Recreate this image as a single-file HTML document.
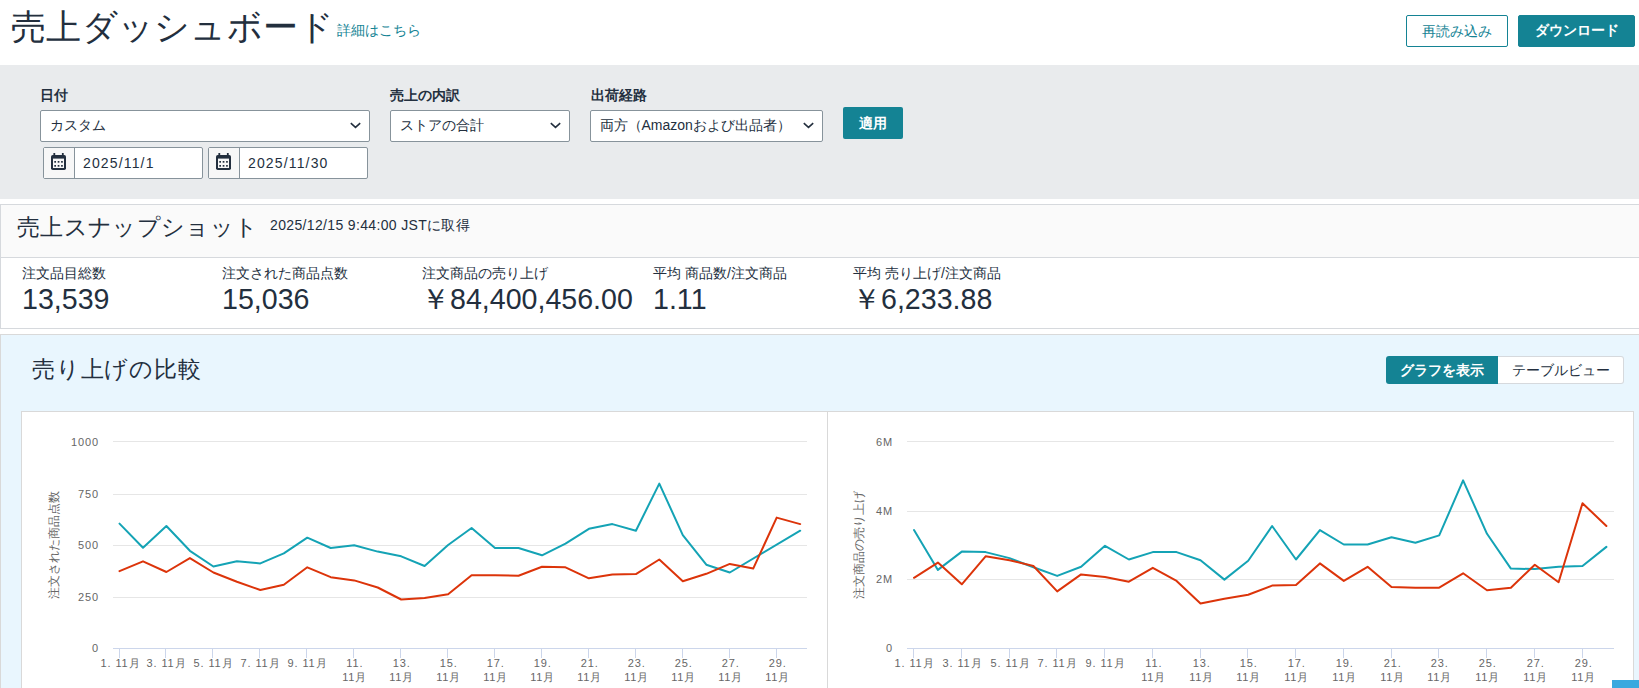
<!DOCTYPE html>
<html lang="ja"><head><meta charset="utf-8">
<style>
*{box-sizing:border-box;margin:0;padding:0}
html,body{width:1639px;height:688px;overflow:hidden;background:#fff}
body{position:relative;font-family:"Liberation Sans",sans-serif;color:#232f3e}
.a{position:absolute;white-space:nowrap}
.h1{left:11px;top:3px;font-size:35px;line-height:48px;letter-spacing:0.3px}
.lnk{left:337px;top:20px;font-size:14px;line-height:20px;color:#148394}
.btn{position:absolute;top:15px;height:32px;border-radius:2px;font-size:14px;line-height:30px;text-align:center}
.b1{left:1406px;width:102px;border:1px solid #148394;color:#148394;background:#fff}
.b2{left:1518px;width:117px;background:#148394;color:#fff;font-weight:bold;border:1px solid #148394;line-height:29px}
.bar{left:0;top:65px;width:1639px;height:134px;background:#e9ebed}
.lab{font-size:14px;font-weight:bold;line-height:20px;top:85px}
.sel{position:absolute;top:110px;height:32px;background:#fff;border:1px solid #87939b;border-radius:2px;font-size:14px;line-height:29px;padding-left:8.5px}
.chev{position:absolute;right:8px;top:10.5px;width:11px;height:7px}
.date{position:absolute;top:147px;height:32px;width:160px;background:#fff;border:1px solid #87939b;border-radius:2px}
.date .ic{position:absolute;left:0;top:0;width:31px;height:30px;background:#f7f7f7;border-right:1px solid #87939b}
.date .tx{position:absolute;left:39px;top:0;font-size:14px;line-height:30px;letter-spacing:1.15px}
.apply{position:absolute;left:843px;top:107px;width:60px;height:32px;background:#148394;color:#fff;border-radius:2px;font-size:14px;font-weight:bold;line-height:32px;text-align:center}
.snap{left:0;top:204px;width:1700px;height:125px;border:1px solid #d6d9dd;background:#fff}
.snaph{position:absolute;left:0;top:0;width:100%;height:53px;background:#fafafa;border-bottom:1px solid #d6d9dd}
.t24{font-size:23px;line-height:32px;letter-spacing:0.35px}
.ml{font-size:14px;line-height:20px;top:263px}
.mv{font-size:28.6px;line-height:36px;top:281px;letter-spacing:0px}
.cmp{left:0;top:334px;width:1700px;height:400px;border:1px solid #d9d9d9;background:#e9f6fe}
.tg{position:absolute;top:356px;height:28px;font-size:14px;line-height:28px;text-align:center}
.panel{left:21px;top:411px;width:1613px;height:300px;background:#fff;border:1px solid #d9d9d9}
svg.full{position:absolute;left:0;top:0}
.date svg{position:absolute}
.axt{font-size:12px;fill:#666}
.ax{font-size:11px;fill:#666;letter-spacing:0.9px}
</style></head><body>
<div class="a h1">売上ダッシュボード</div>
<div class="a lnk">詳細はこちら</div>
<div class="btn b1">再読み込み</div>
<div class="btn b2">ダウンロード</div>

<div class="a bar"></div>
<div class="a lab" style="left:40px">日付</div>
<div class="sel" style="left:40px;width:330px">カスタム<svg class="chev" viewBox="0 0 11 7"><path d="M0.8 1.2 L5.5 5.4 L10.2 1.2" fill="none" stroke="#232f3e" stroke-width="1.6"/></svg></div>
<div class="date" style="left:43px"><div class="ic"><svg width="16" height="17" style="left:7px;top:5px" viewBox="0 0 16 17"><rect x="0" y="2" width="15" height="15" rx="1.8" fill="#232f3e"/><rect x="2" y="5.6" width="11" height="9.4" fill="#f7f7f7"/><rect x="2.4" y="0" width="1.8" height="3" fill="#232f3e"/><rect x="10.9" y="0" width="1.8" height="3" fill="#232f3e"/><g fill="#232f3e"><rect x="3.3" y="8" width="1.7" height="1.7"/><rect x="6.7" y="8" width="1.7" height="1.7"/><rect x="10.1" y="8" width="1.7" height="1.7"/><rect x="3.3" y="12" width="1.7" height="1.7"/><rect x="6.7" y="12" width="1.7" height="1.7"/><rect x="10.1" y="12" width="1.7" height="1.7"/></g></svg></div><div class="tx">2025/11/1</div></div>
<div class="date" style="left:208px"><div class="ic"><svg width="16" height="17" style="left:7px;top:5px" viewBox="0 0 16 17"><rect x="0" y="2" width="15" height="15" rx="1.8" fill="#232f3e"/><rect x="2" y="5.6" width="11" height="9.4" fill="#f7f7f7"/><rect x="2.4" y="0" width="1.8" height="3" fill="#232f3e"/><rect x="10.9" y="0" width="1.8" height="3" fill="#232f3e"/><g fill="#232f3e"><rect x="3.3" y="8" width="1.7" height="1.7"/><rect x="6.7" y="8" width="1.7" height="1.7"/><rect x="10.1" y="8" width="1.7" height="1.7"/><rect x="3.3" y="12" width="1.7" height="1.7"/><rect x="6.7" y="12" width="1.7" height="1.7"/><rect x="10.1" y="12" width="1.7" height="1.7"/></g></svg></div><div class="tx">2025/11/30</div></div>
<div class="a lab" style="left:390px">売上の内訳</div>
<div class="sel" style="left:390px;width:180px">ストアの合計<svg class="chev" viewBox="0 0 11 7"><path d="M0.8 1.2 L5.5 5.4 L10.2 1.2" fill="none" stroke="#232f3e" stroke-width="1.6"/></svg></div>
<div class="a lab" style="left:591px">出荷経路</div>
<div class="sel" style="left:590px;width:233px">両方（Amazonおよび出品者）<svg class="chev" viewBox="0 0 11 7"><path d="M0.8 1.2 L5.5 5.4 L10.2 1.2" fill="none" stroke="#232f3e" stroke-width="1.6"/></svg></div>
<div class="apply">適用</div>

<div class="a snap"><div class="snaph"></div></div>
<div class="a t24" style="left:17px;top:211px">売上スナップショット</div>
<div class="a" style="left:270px;top:215px;font-size:14px;line-height:20px;letter-spacing:0.35px">2025/12/15 9:44:00 JSTに取得</div>
<div class="a ml" style="left:22px">注文品目総数</div>
<div class="a mv" style="left:22px">13,539</div>
<div class="a ml" style="left:222px">注文された商品点数</div>
<div class="a mv" style="left:222px">15,036</div>
<div class="a ml" style="left:422px">注文商品の売り上げ</div>
<div class="a mv" style="left:421px">￥84,400,456.00</div>
<div class="a ml" style="left:653px">平均 商品数/注文商品</div>
<div class="a mv" style="left:653px">1.11</div>
<div class="a ml" style="left:853px">平均 売り上げ/注文商品</div>
<div class="a mv" style="left:852px">￥6,233.88</div>

<div class="a cmp"></div>
<div class="a t24" style="left:32px;top:353px;letter-spacing:0.75px">売り上げの比較</div>
<div class="tg" style="left:1386px;width:112px;background:#148394;color:#fff;font-weight:bold;border-radius:3px 0 0 3px">グラフを表示</div>
<div class="tg" style="left:1498px;width:126px;background:#fff;border:1px solid #d6d9dd;border-left:0;border-radius:0 3px 3px 0;line-height:26px">テーブルビュー</div>
<div class="a panel"></div>
<svg class="full" width="1639" height="688" viewBox="0 0 1639 688">
<path d="M113 441.5 H807" stroke="#e6e6e6" stroke-width="1"/>
<text class="ax" x="99" y="445.5" text-anchor="end">1000</text>
<path d="M113 494.5 H807" stroke="#e6e6e6" stroke-width="1"/>
<text class="ax" x="99" y="497.6" text-anchor="end">750</text>
<path d="M113 545.5 H807" stroke="#e6e6e6" stroke-width="1"/>
<text class="ax" x="99" y="548.6" text-anchor="end">500</text>
<path d="M113 597.5 H807" stroke="#e6e6e6" stroke-width="1"/>
<text class="ax" x="99" y="600.6" text-anchor="end">250</text>
<path d="M113 648.5 H807" stroke="#ccd6eb" stroke-width="1"/>
<text class="ax" x="99" y="651.6" text-anchor="end">0</text>
<path d="M119.5 648 V658" stroke="#ccd6eb" stroke-width="1"/>
<text class="ax" x="120.5" y="667" text-anchor="middle">1. 11月</text>
<path d="M165.5 648 V658" stroke="#ccd6eb" stroke-width="1"/>
<text class="ax" x="166.5" y="667" text-anchor="middle">3. 11月</text>
<path d="M212.5 648 V658" stroke="#ccd6eb" stroke-width="1"/>
<text class="ax" x="213.5" y="667" text-anchor="middle">5. 11月</text>
<path d="M259.5 648 V658" stroke="#ccd6eb" stroke-width="1"/>
<text class="ax" x="260.5" y="667" text-anchor="middle">7. 11月</text>
<path d="M306.5 648 V658" stroke="#ccd6eb" stroke-width="1"/>
<text class="ax" x="307.5" y="667" text-anchor="middle">9. 11月</text>
<path d="M353.5 648 V658" stroke="#ccd6eb" stroke-width="1"/>
<text class="ax" x="354.8" y="667" text-anchor="middle">11.</text><text class="ax" x="354.7" y="681" text-anchor="middle">11月</text>
<path d="M400.5 648 V658" stroke="#ccd6eb" stroke-width="1"/>
<text class="ax" x="401.8" y="667" text-anchor="middle">13.</text><text class="ax" x="401.7" y="681" text-anchor="middle">11月</text>
<path d="M447.5 648 V658" stroke="#ccd6eb" stroke-width="1"/>
<text class="ax" x="448.8" y="667" text-anchor="middle">15.</text><text class="ax" x="448.7" y="681" text-anchor="middle">11月</text>
<path d="M494.5 648 V658" stroke="#ccd6eb" stroke-width="1"/>
<text class="ax" x="495.8" y="667" text-anchor="middle">17.</text><text class="ax" x="495.7" y="681" text-anchor="middle">11月</text>
<path d="M541.5 648 V658" stroke="#ccd6eb" stroke-width="1"/>
<text class="ax" x="542.8" y="667" text-anchor="middle">19.</text><text class="ax" x="542.7" y="681" text-anchor="middle">11月</text>
<path d="M588.5 648 V658" stroke="#ccd6eb" stroke-width="1"/>
<text class="ax" x="589.8" y="667" text-anchor="middle">21.</text><text class="ax" x="589.7" y="681" text-anchor="middle">11月</text>
<path d="M635.5 648 V658" stroke="#ccd6eb" stroke-width="1"/>
<text class="ax" x="636.8" y="667" text-anchor="middle">23.</text><text class="ax" x="636.7" y="681" text-anchor="middle">11月</text>
<path d="M682.5 648 V658" stroke="#ccd6eb" stroke-width="1"/>
<text class="ax" x="683.8" y="667" text-anchor="middle">25.</text><text class="ax" x="683.7" y="681" text-anchor="middle">11月</text>
<path d="M729.5 648 V658" stroke="#ccd6eb" stroke-width="1"/>
<text class="ax" x="730.8" y="667" text-anchor="middle">27.</text><text class="ax" x="730.7" y="681" text-anchor="middle">11月</text>
<path d="M776.5 648 V658" stroke="#ccd6eb" stroke-width="1"/>
<text class="ax" x="777.8" y="667" text-anchor="middle">29.</text><text class="ax" x="777.7" y="681" text-anchor="middle">11月</text>
<text class="axt" transform="translate(57.5 544.5) rotate(-90)" text-anchor="middle">注文された商品点数</text>
<path d="M119.5 523.6 L143.0 547.7 L166.4 526.0 L189.9 550.8 L213.4 566.5 L236.9 561.3 L260.3 563.4 L283.8 553.4 L307.3 537.7 L330.7 548.0 L354.2 545.3 L377.7 551.6 L401.2 556.3 L424.6 566.0 L448.1 545.0 L471.6 528.0 L495.0 548.0 L518.5 548.0 L542.0 555.3 L565.5 543.7 L588.9 528.8 L612.4 524.1 L635.9 530.7 L659.3 483.6 L682.8 535.1 L706.3 564.7 L729.8 572.5 L800.2 530.7" fill="none" stroke="#14a3b5" stroke-width="2" stroke-linejoin="round" stroke-linecap="round"/>
<path d="M119.5 571.2 L143.0 561.3 L166.4 572.0 L189.9 558.1 L213.4 572.5 L236.9 581.7 L260.3 590.0 L283.8 584.8 L307.3 567.3 L330.7 577.2 L354.2 580.4 L377.7 587.5 L401.2 599.5 L424.6 598.0 L448.1 594.3 L471.6 575.2 L495.0 575.2 L518.5 575.7 L542.0 566.8 L565.5 567.3 L588.9 578.3 L612.4 574.4 L635.9 574.1 L659.3 559.5 L682.8 581.2 L706.3 573.8 L729.8 563.9 L753.2 568.6 L776.7 517.6 L800.2 524.1" fill="none" stroke="#dc340a" stroke-width="2" stroke-linejoin="round" stroke-linecap="round"/>
<path d="M827.5 411 V688" stroke="#d9d9d9" stroke-width="1"/>
<path d="M907 441.5 H1614" stroke="#e6e6e6" stroke-width="1"/>
<text class="ax" x="893" y="445.5" text-anchor="end">6M</text>
<path d="M907 511.5 H1614" stroke="#e6e6e6" stroke-width="1"/>
<text class="ax" x="893" y="514.6" text-anchor="end">4M</text>
<path d="M907 579.5 H1614" stroke="#e6e6e6" stroke-width="1"/>
<text class="ax" x="893" y="582.6" text-anchor="end">2M</text>
<path d="M907 648.5 H1614" stroke="#ccd6eb" stroke-width="1"/>
<text class="ax" x="893" y="651.6" text-anchor="end">0</text>
<path d="M913.5 648 V658" stroke="#ccd6eb" stroke-width="1"/>
<text class="ax" x="914.5" y="667" text-anchor="middle">1. 11月</text>
<path d="M961.5 648 V658" stroke="#ccd6eb" stroke-width="1"/>
<text class="ax" x="962.5" y="667" text-anchor="middle">3. 11月</text>
<path d="M1009.5 648 V658" stroke="#ccd6eb" stroke-width="1"/>
<text class="ax" x="1010.5" y="667" text-anchor="middle">5. 11月</text>
<path d="M1056.5 648 V658" stroke="#ccd6eb" stroke-width="1"/>
<text class="ax" x="1057.5" y="667" text-anchor="middle">7. 11月</text>
<path d="M1104.5 648 V658" stroke="#ccd6eb" stroke-width="1"/>
<text class="ax" x="1105.5" y="667" text-anchor="middle">9. 11月</text>
<path d="M1152.5 648 V658" stroke="#ccd6eb" stroke-width="1"/>
<text class="ax" x="1153.8" y="667" text-anchor="middle">11.</text><text class="ax" x="1153.7" y="681" text-anchor="middle">11月</text>
<path d="M1200.5 648 V658" stroke="#ccd6eb" stroke-width="1"/>
<text class="ax" x="1201.8" y="667" text-anchor="middle">13.</text><text class="ax" x="1201.7" y="681" text-anchor="middle">11月</text>
<path d="M1247.5 648 V658" stroke="#ccd6eb" stroke-width="1"/>
<text class="ax" x="1248.8" y="667" text-anchor="middle">15.</text><text class="ax" x="1248.7" y="681" text-anchor="middle">11月</text>
<path d="M1295.5 648 V658" stroke="#ccd6eb" stroke-width="1"/>
<text class="ax" x="1296.8" y="667" text-anchor="middle">17.</text><text class="ax" x="1296.7" y="681" text-anchor="middle">11月</text>
<path d="M1343.5 648 V658" stroke="#ccd6eb" stroke-width="1"/>
<text class="ax" x="1344.8" y="667" text-anchor="middle">19.</text><text class="ax" x="1344.7" y="681" text-anchor="middle">11月</text>
<path d="M1391.5 648 V658" stroke="#ccd6eb" stroke-width="1"/>
<text class="ax" x="1392.8" y="667" text-anchor="middle">21.</text><text class="ax" x="1392.7" y="681" text-anchor="middle">11月</text>
<path d="M1438.5 648 V658" stroke="#ccd6eb" stroke-width="1"/>
<text class="ax" x="1439.8" y="667" text-anchor="middle">23.</text><text class="ax" x="1439.7" y="681" text-anchor="middle">11月</text>
<path d="M1486.5 648 V658" stroke="#ccd6eb" stroke-width="1"/>
<text class="ax" x="1487.8" y="667" text-anchor="middle">25.</text><text class="ax" x="1487.7" y="681" text-anchor="middle">11月</text>
<path d="M1534.5 648 V658" stroke="#ccd6eb" stroke-width="1"/>
<text class="ax" x="1535.8" y="667" text-anchor="middle">27.</text><text class="ax" x="1535.7" y="681" text-anchor="middle">11月</text>
<path d="M1582.5 648 V658" stroke="#ccd6eb" stroke-width="1"/>
<text class="ax" x="1583.8" y="667" text-anchor="middle">29.</text><text class="ax" x="1583.7" y="681" text-anchor="middle">11月</text>
<text class="axt" transform="translate(862.5 544.5) rotate(-90)" text-anchor="middle">注文商品の売り上げ</text>
<path d="M914.0 530.1 L937.9 569.9 L961.8 551.6 L985.6 552.1 L1009.5 558.1 L1033.4 567.3 L1057.2 575.9 L1081.1 566.8 L1105.0 545.8 L1128.9 559.5 L1152.8 552.1 L1176.6 552.1 L1200.5 560.2 L1224.4 579.6 L1248.2 560.8 L1272.1 526.0 L1296.0 559.5 L1319.9 530.1 L1343.8 544.5 L1367.6 544.5 L1391.5 537.2 L1415.4 542.7 L1439.2 535.4 L1463.1 480.4 L1487.0 533.8 L1510.9 568.6 L1534.8 569.1 L1558.6 566.8 L1582.5 566.0 L1606.4 546.9" fill="none" stroke="#14a3b5" stroke-width="2" stroke-linejoin="round" stroke-linecap="round"/>
<path d="M914.0 577.8 L937.9 562.6 L961.8 584.3 L985.6 556.3 L1009.5 560.2 L1033.4 566.0 L1057.2 591.4 L1081.1 574.4 L1105.0 577.0 L1128.9 581.7 L1152.8 567.8 L1176.6 580.9 L1200.5 603.4 L1224.4 598.7 L1248.2 594.8 L1272.1 585.6 L1296.0 585.1 L1319.9 563.4 L1343.8 580.9 L1367.6 566.8 L1391.5 586.9 L1415.4 587.7 L1439.2 587.7 L1463.1 573.3 L1487.0 590.3 L1510.9 587.7 L1534.8 564.7 L1558.6 582.2 L1582.5 503.2 L1606.4 526.0" fill="none" stroke="#dc340a" stroke-width="2" stroke-linejoin="round" stroke-linecap="round"/>
<rect x="1612" y="680" width="27" height="8" fill="#3aa9df"/>
</svg>
</body></html>
